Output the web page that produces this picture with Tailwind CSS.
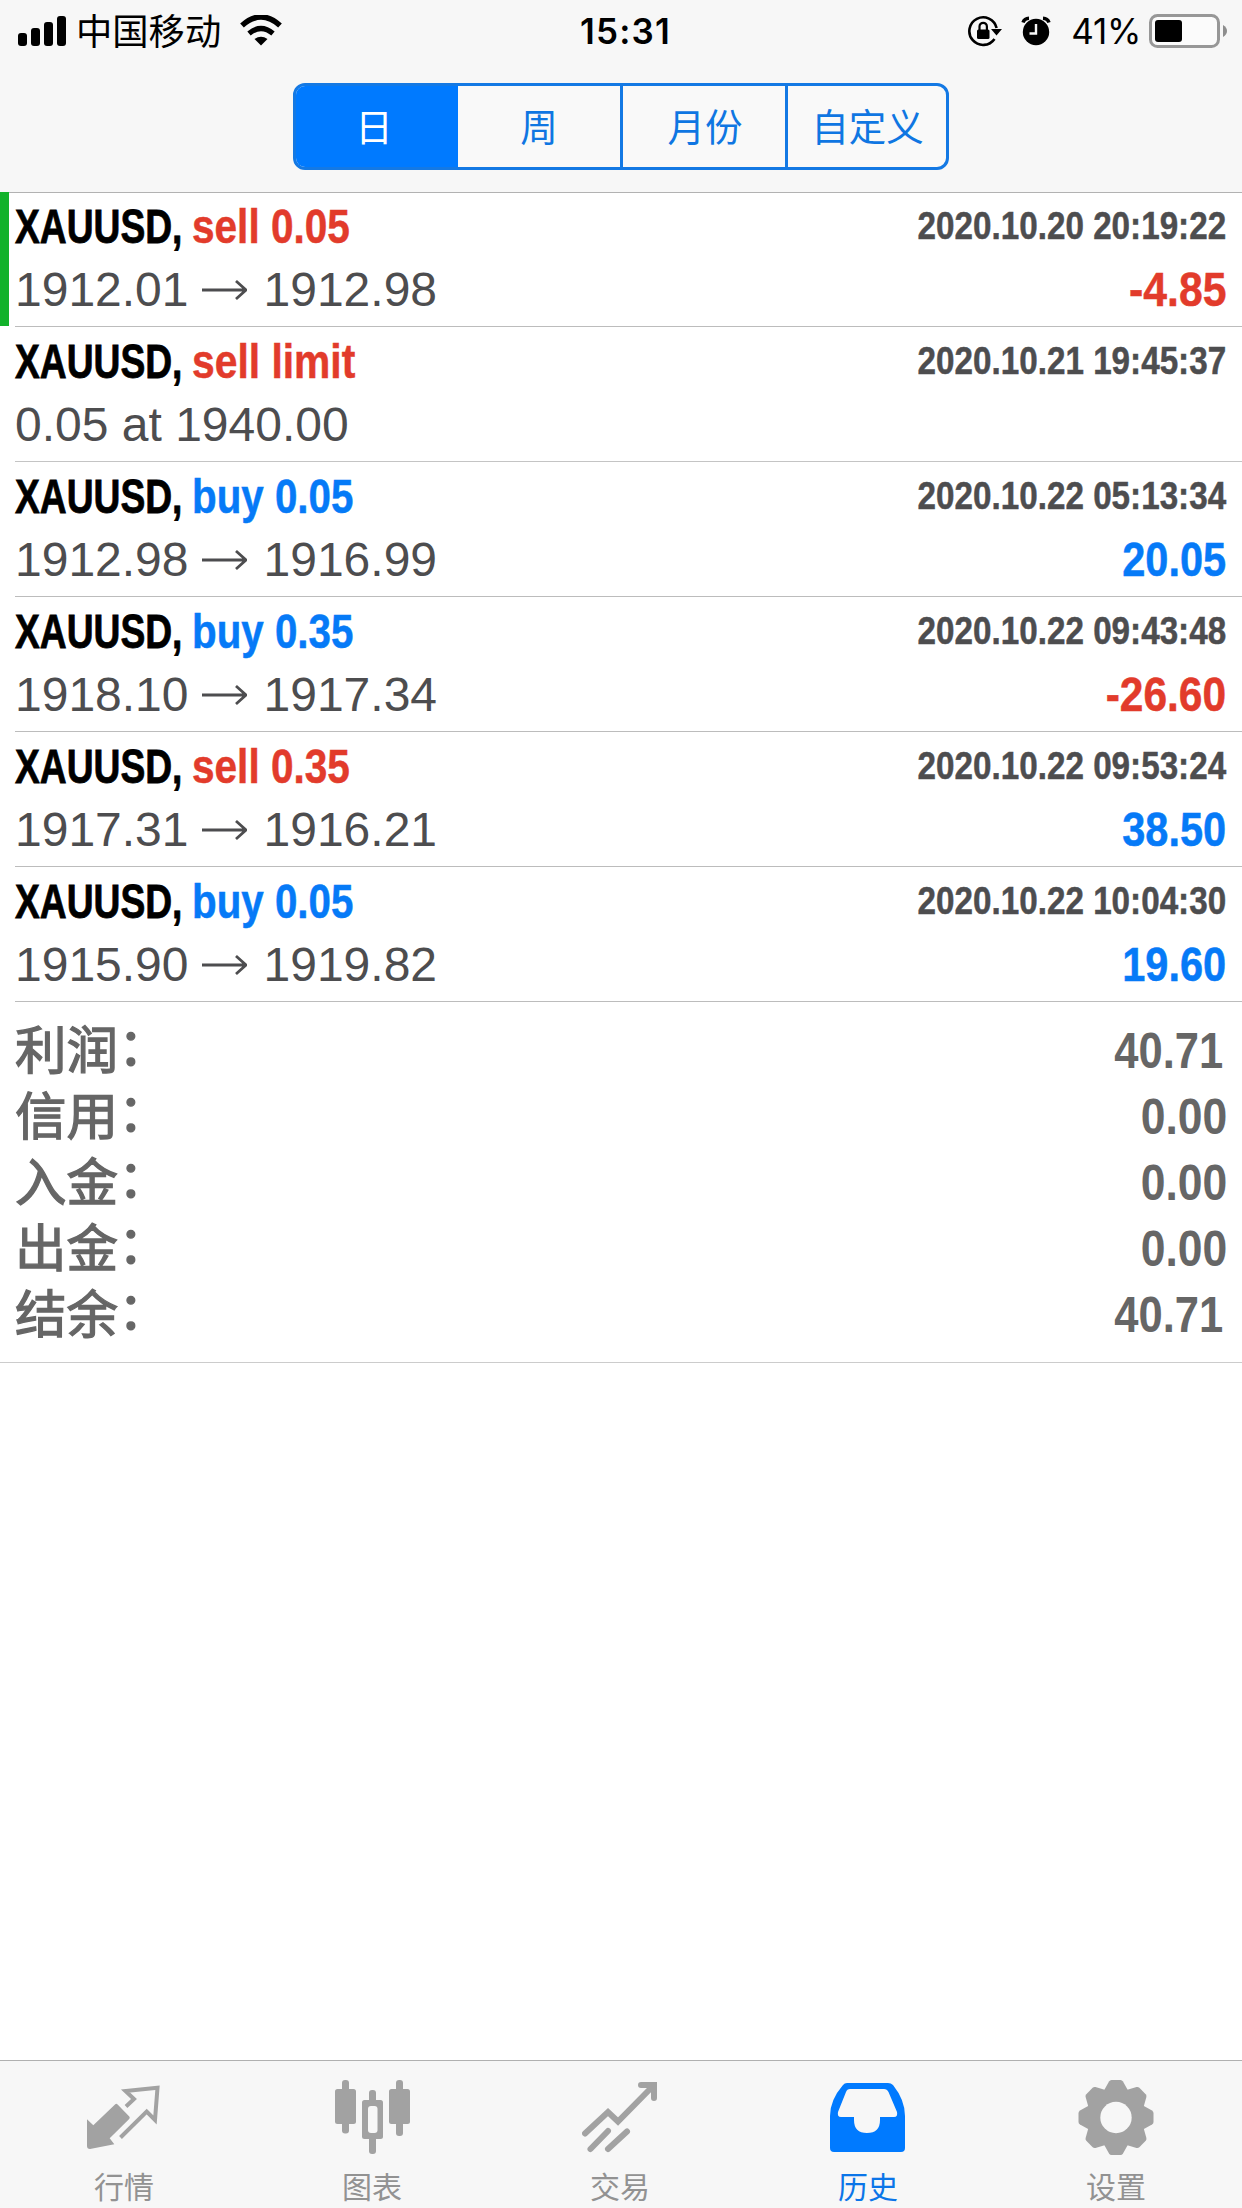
<!DOCTYPE html>
<html lang="zh-CN">
<head>
<meta charset="utf-8">
<title>历史</title>
<script src="https://cdn.jsdelivr.net/npm/@tailwindcss/browser@4"></script>
</head>
<body class="bg-white">
<div class="flex h-[2208px] w-[1242px] flex-col overflow-hidden bg-white font-['Liberation_Sans','Noto_Sans_CJK_SC',sans-serif] text-[#4d4d4f]">
  <header class="flex h-[193px] shrink-0 flex-col border-b border-[#b2b2b2] bg-[#f7f7f7] text-black">
    <div class="grid h-[60px] grid-cols-3 items-center pt-[2px]">
      <div class="flex items-center pl-[18px]">
        <svg class="h-[30px] w-[48px]" viewBox="0 0 48 30"><rect y="17" width="9" height="13" rx="3"/><rect x="13" y="12" width="9" height="18" rx="3"/><rect x="26" y="6" width="9" height="24" rx="3"/><rect x="39" y="0" width="9" height="30" rx="3"/></svg>
        <span class="ml-[10px] pb-[3px] font-['Noto_Sans_CJK_SC',sans-serif] text-[36.3px] leading-none">中国移动</span>
        <svg class="ml-[19px] h-[31px] w-[42px]" viewBox="0 0 42 31" fill="none" stroke="#000"><path d="M2 10.500Q21-6.500 40 10.500" stroke-width="5.500"/><path d="M9 18.500Q21 8.500 33 18.500" stroke-width="5.200"/><path d="M14.500 24Q21 19.500 27.500 24L21 30.500Z" fill="#000" stroke="none"/></svg>
      </div>
      <div class="pl-[9px] text-center font-['Inter',sans-serif] text-[35px] leading-none font-semibold tracking-[1.200px]">15:31</div>
      <div class="flex items-center justify-end pr-[14px]">
        <svg class="h-[32px] w-[34px]" viewBox="0 0 34 32"><path d="M26.500 24A13.800 13.800 0 1 1 28.600 13" fill="none" stroke="#000" stroke-width="2.600"/><path d="M23 14H34L28.500 20.500Z"/><rect x="9" y="14.500" width="12.500" height="9.500" rx="1.500"/><path d="M11.500 15V11.500a3.700 3.700 0 0 1 7.400 0V15" fill="none" stroke="#000" stroke-width="2.200"/></svg>
        <svg class="ml-[19px] h-[30px] w-[30px]" viewBox="0 0 30 30"><circle cx="15" cy="16" r="13.200"/><path d="M2 6.500Q3.500 2.500 8 2.300M28 6.500Q26.500 2.500 22 2.300" fill="none" stroke="#000" stroke-width="3.500"/><path d="M15 8V17.500H8.500" fill="none" stroke="#f7f7f7" stroke-width="2.400"/></svg>
        <span class="ml-[20px] font-['Inter',sans-serif] text-[35px] leading-none tracking-[-0.300px]">41%</span>
        <svg class="ml-[8px] h-[34px] w-[79px]" viewBox="0 0 79 34"><rect x="1.500" y="1.500" width="68" height="31" rx="7" fill="#fbfbfb" stroke="#979797" stroke-width="3"/><rect x="6" y="6" width="27" height="22" rx="3"/><path d="M74 11q4 2.500 4 6t-4 6z" fill="#8e8e8e"/></svg>
      </div>
    </div>
    <div class="mx-auto mt-[23px] grid h-[87px] w-[656px] grid-cols-[162px_165px_165px_158px] overflow-hidden rounded-[12px] border-[3px] border-[#1479e4] bg-[#f9f9f9] text-center font-['Noto_Sans_CJK_SC',sans-serif] text-[37.500px] leading-[77px] text-[#0f76e2]">
      <div class="bg-[#007aff] pr-[6px] text-white">日</div>
      <div class="border-r-[3px] border-[#1479e4]">周</div>
      <div class="border-r-[3px] border-[#1479e4] pl-[2px]">月份</div>
      <div class="pl-px">自定义</div>
    </div>
  </header>

  <main class="-mt-px flex-1">
    <section>
      <div class="relative h-[135px] pl-[15px]">
        <i class="absolute top-0 left-0 h-[134px] w-[9px] bg-[#12b22b]"></i>
        <div class="h-full border-b border-[#bcbcbc] pr-[16px]">
          <div class="flex h-[68px] items-center justify-between leading-none font-bold whitespace-nowrap">
            <div class="flex pt-[2px] text-[48px]"><span class="w-[177px] origin-left scale-x-[0.775] text-black [-webkit-text-stroke:0.800px]">XAUUSD,</span><span class="origin-left scale-x-[0.845] text-[#e23b2b] [-webkit-text-stroke:0.500px]">sell 0.05</span></div>
            <span class="origin-right scale-x-[0.852] pb-[2px] text-[39px] [-webkit-text-stroke:0.500px]">2020.10.20 20:19:22</span>
          </div>
          <div class="flex h-[59px] items-center justify-between text-[48px] leading-none whitespace-nowrap">
            <div class="flex items-center">1912.01<svg class="mr-[17px] ml-[13px] h-[22px] w-[45px]" viewBox="0 0 45 22" fill="none" stroke="currentColor" stroke-width="2.800"><path d="M0 11H44M34 2L44 11L34 20"/></svg>1912.98</div>
            <span class="origin-right scale-x-[0.890] font-bold text-[#e23b2b] [-webkit-text-stroke:0.500px]">-4.85</span>
          </div>
        </div>
      </div>

      <div class="h-[135px] pl-[15px]">
        <div class="h-full border-b border-[#c4c4c4] pr-[16px]">
          <div class="flex h-[68px] items-center justify-between leading-none font-bold whitespace-nowrap">
            <div class="flex pt-[2px] text-[48px]"><span class="w-[177px] origin-left scale-x-[0.775] text-black [-webkit-text-stroke:0.800px]">XAUUSD,</span><span class="origin-left scale-x-[0.850] text-[#e23b2b] [-webkit-text-stroke:0.500px]">sell limit</span></div>
            <span class="origin-right scale-x-[0.852] pb-[2px] text-[39px] [-webkit-text-stroke:0.500px]">2020.10.21 19:45:37</span>
          </div>
          <div class="flex h-[59px] items-center text-[48px] leading-none whitespace-nowrap">0.05 at 1940.00</div>
        </div>
      </div>

      <div class="h-[135px] pl-[15px]">
        <div class="h-full border-b border-[#bcbcbc] pr-[16px]">
          <div class="flex h-[68px] items-center justify-between leading-none font-bold whitespace-nowrap">
            <div class="flex pt-[2px] text-[48px]"><span class="w-[177px] origin-left scale-x-[0.775] text-black [-webkit-text-stroke:0.800px]">XAUUSD,</span><span class="origin-left scale-x-[0.840] text-[#067af7] [-webkit-text-stroke:0.500px]">buy 0.05</span></div>
            <span class="origin-right scale-x-[0.852] pb-[2px] text-[39px] [-webkit-text-stroke:0.500px]">2020.10.22 05:13:34</span>
          </div>
          <div class="flex h-[59px] items-center justify-between text-[48px] leading-none whitespace-nowrap">
            <div class="flex items-center">1912.98<svg class="mr-[17px] ml-[13px] h-[22px] w-[45px]" viewBox="0 0 45 22" fill="none" stroke="currentColor" stroke-width="2.800"><path d="M0 11H44M34 2L44 11L34 20"/></svg>1916.99</div>
            <span class="origin-right scale-x-[0.865] font-bold text-[#067af7] [-webkit-text-stroke:0.500px]">20.05</span>
          </div>
        </div>
      </div>

      <div class="h-[135px] pl-[15px]">
        <div class="h-full border-b border-[#bcbcbc] pr-[16px]">
          <div class="flex h-[68px] items-center justify-between leading-none font-bold whitespace-nowrap">
            <div class="flex pt-[2px] text-[48px]"><span class="w-[177px] origin-left scale-x-[0.775] text-black [-webkit-text-stroke:0.800px]">XAUUSD,</span><span class="origin-left scale-x-[0.840] text-[#067af7] [-webkit-text-stroke:0.500px]">buy 0.35</span></div>
            <span class="origin-right scale-x-[0.852] pb-[2px] text-[39px] [-webkit-text-stroke:0.500px]">2020.10.22 09:43:48</span>
          </div>
          <div class="flex h-[59px] items-center justify-between text-[48px] leading-none whitespace-nowrap">
            <div class="flex items-center">1918.10<svg class="mr-[17px] ml-[13px] h-[22px] w-[45px]" viewBox="0 0 45 22" fill="none" stroke="currentColor" stroke-width="2.800"><path d="M0 11H44M34 2L44 11L34 20"/></svg>1917.34</div>
            <span class="origin-right scale-x-[0.885] font-bold text-[#e23b2b] [-webkit-text-stroke:0.500px]">-26.60</span>
          </div>
        </div>
      </div>

      <div class="h-[135px] pl-[15px]">
        <div class="h-full border-b border-[#bcbcbc] pr-[16px]">
          <div class="flex h-[68px] items-center justify-between leading-none font-bold whitespace-nowrap">
            <div class="flex pt-[2px] text-[48px]"><span class="w-[177px] origin-left scale-x-[0.775] text-black [-webkit-text-stroke:0.800px]">XAUUSD,</span><span class="origin-left scale-x-[0.845] text-[#e23b2b] [-webkit-text-stroke:0.500px]">sell 0.35</span></div>
            <span class="origin-right scale-x-[0.852] pb-[2px] text-[39px] [-webkit-text-stroke:0.500px]">2020.10.22 09:53:24</span>
          </div>
          <div class="flex h-[59px] items-center justify-between text-[48px] leading-none whitespace-nowrap">
            <div class="flex items-center">1917.31<svg class="mr-[17px] ml-[13px] h-[22px] w-[45px]" viewBox="0 0 45 22" fill="none" stroke="currentColor" stroke-width="2.800"><path d="M0 11H44M34 2L44 11L34 20"/></svg>1916.21</div>
            <span class="origin-right scale-x-[0.865] font-bold text-[#067af7] [-webkit-text-stroke:0.500px]">38.50</span>
          </div>
        </div>
      </div>

      <div class="h-[135px] pl-[15px]">
        <div class="h-full border-b border-[#bcbcbc] pr-[16px]">
          <div class="flex h-[68px] items-center justify-between leading-none font-bold whitespace-nowrap">
            <div class="flex pt-[2px] text-[48px]"><span class="w-[177px] origin-left scale-x-[0.775] text-black [-webkit-text-stroke:0.800px]">XAUUSD,</span><span class="origin-left scale-x-[0.840] text-[#067af7] [-webkit-text-stroke:0.500px]">buy 0.05</span></div>
            <span class="origin-right scale-x-[0.852] pb-[2px] text-[39px] [-webkit-text-stroke:0.500px]">2020.10.22 10:04:30</span>
          </div>
          <div class="flex h-[59px] items-center justify-between text-[48px] leading-none whitespace-nowrap">
            <div class="flex items-center">1915.90<svg class="mr-[17px] ml-[13px] h-[22px] w-[45px]" viewBox="0 0 45 22" fill="none" stroke="currentColor" stroke-width="2.800"><path d="M0 11H44M34 2L44 11L34 20"/></svg>1919.82</div>
            <span class="origin-right scale-x-[0.865] font-bold text-[#067af7] [-webkit-text-stroke:0.500px]">19.60</span>
          </div>
        </div>
      </div>
    </section>

    <section class="h-[361px] border-b border-[#cccccc] pt-[16px] pr-[15px] pl-[15px] text-[#666]">
      <div class="flex h-[66px] items-center justify-between leading-none"><span class="flex pb-[9px] font-['Noto_Sans_CJK_SC',sans-serif] text-[51.500px] [-webkit-text-stroke:1.300px_#666]">利润<i class="-mt-[4px] not-italic">：</i></span><b class="mr-[4px] origin-right scale-x-[0.870] text-[50px]">40.71</b></div>
      <div class="flex h-[66px] items-center justify-between leading-none"><span class="flex pb-[9px] font-['Noto_Sans_CJK_SC',sans-serif] text-[51.500px] [-webkit-text-stroke:1.300px_#666]">信用<i class="-mt-[4px] not-italic">：</i></span><b class="origin-right scale-x-[0.890] text-[50px]">0.00</b></div>
      <div class="flex h-[66px] items-center justify-between leading-none"><span class="flex pb-[9px] font-['Noto_Sans_CJK_SC',sans-serif] text-[51.500px] [-webkit-text-stroke:1.300px_#666]">入金<i class="-mt-[4px] not-italic">：</i></span><b class="origin-right scale-x-[0.890] text-[50px]">0.00</b></div>
      <div class="flex h-[66px] items-center justify-between leading-none"><span class="flex pb-[9px] font-['Noto_Sans_CJK_SC',sans-serif] text-[51.500px] [-webkit-text-stroke:1.300px_#666]">出金<i class="-mt-[4px] not-italic">：</i></span><b class="origin-right scale-x-[0.890] text-[50px]">0.00</b></div>
      <div class="flex h-[66px] items-center justify-between leading-none"><span class="flex pb-[9px] font-['Noto_Sans_CJK_SC',sans-serif] text-[51.500px] [-webkit-text-stroke:1.300px_#666]">结余<i class="-mt-[4px] not-italic">：</i></span><b class="mr-[4px] origin-right scale-x-[0.870] text-[50px]">40.71</b></div>
    </section>
  </main>

  <nav class="grid h-[148px] shrink-0 grid-cols-5 border-t border-[#b0b0b0] bg-[#f7f7f7] pt-[19px] pr-[2px] font-['Noto_Sans_CJK_SC',sans-serif] text-[30px] leading-[31px] text-[#929292]">
    <div class="flex flex-col items-center gap-[14px]">
      <svg class="size-[76px]" viewBox="0 0 76 76" fill="#a2a2a2"><path d="M40 26.500L48 19L39.500 11L71.500 7.700L69 40L60.700 31.500L34.500 57.500" fill="none" stroke="#a2a2a2" stroke-width="4"/><path d="M1 39.300L7.300 45.300L29 24.500Q30.300 23.200 31.600 24.500L43.300 36.500Q44.300 37.700 43.200 38.900L23.700 58.300L28.300 64.300L4 69Q1 69 1 66Z"/></svg>
      <span>行情</span>
    </div>
    <div class="flex flex-col items-center gap-[14px]">
      <svg class="size-[76px]" viewBox="0 0 76 76" fill="#a2a2a2"><rect x="1" y="9" width="21" height="35" rx="2.500"/><rect x="8" y="0" width="7" height="53.500" rx="3"/><rect x="55" y="9" width="21" height="35" rx="2.500"/><rect x="62" y="0" width="7" height="56" rx="3"/><rect x="28" y="20" width="21" height="39" rx="2.500"/><rect x="35" y="10" width="7" height="64" rx="3"/><rect x="34" y="26" width="9.500" height="27" rx="3" fill="#f7f7f7"/></svg>
      <span>图表</span>
    </div>
    <div class="flex flex-col items-center gap-[14px]">
      <svg class="size-[76px]" viewBox="0 0 76 76" fill="none" stroke="#a2a2a2" stroke-width="6" stroke-linecap="round"><path d="M3 53.500L26 32L36 41.500L71 6"/><path d="M59 5H72V18"/><path d="M8.500 69L26 51M26 69L45 51.500"/></svg>
      <span>交易</span>
    </div>
    <div class="flex flex-col items-center gap-[14px] text-[#0b75e8]">
      <svg class="size-[76px]" viewBox="0 0 76 76" fill="#007aff" fill-rule="evenodd"><path d="M13 5Q14.500 3 17 3H58Q61 3 63 5Q75 20 75 36V68Q75 72 71 72H4Q0 72 0 68V36Q0 20 13 5ZM20 9Q17 9 16 12L8 32Q7 37 11 37H24V40Q24 53 37 53T50 40V37H64Q68 37 67 32L58.500 12Q57 9 54 9Z"/></svg>
      <span>历史</span>
    </div>
    <div class="flex flex-col items-center gap-[14px]">
      <svg class="size-[76px]" viewBox="-38 -37.500 76 76" fill="#a2a2a2"><circle r="29.500"/><g id="teeth"><path id="tooth" d="M-12-27L-7-36Q-6-37.500-4.500-37.500H4.500Q6-37.500 7-36L12-27V0H-12Z"/><use href="#tooth" transform="rotate(45)"/><use href="#tooth" transform="rotate(90)"/><use href="#tooth" transform="rotate(135)"/></g><use href="#teeth" transform="rotate(180)"/><circle r="15.700" fill="#f7f7f7"/></svg>
      <span>设置</span>
    </div>
  </nav>
</div>
</body>
</html>
